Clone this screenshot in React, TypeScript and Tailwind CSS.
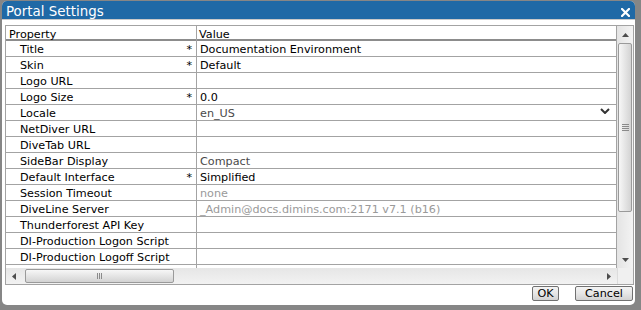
type SettingRowT = {
  label: string;
  required?: boolean;
  value?: string;
  tone?: "dark" | "mid" | "light";
  dropdown?: boolean;
};

const settings: SettingRowT[] = [
  { label: "Title", required: true, value: "Documentation Environment", tone: "dark" },
  { label: "Skin", required: true, value: "Default", tone: "dark" },
  { label: "Logo URL" },
  { label: "Logo Size", required: true, value: "0.0", tone: "dark" },
  { label: "Locale", value: "en_US", tone: "mid", dropdown: true },
  { label: "NetDiver URL" },
  { label: "DiveTab URL" },
  { label: "SideBar Display", value: "Compact", tone: "mid" },
  { label: "Default Interface", required: true, value: "Simplified", tone: "dark" },
  { label: "Session Timeout", value: "none", tone: "light" },
  { label: "DiveLine Server", value: "_Admin@docs.dimins.com:2171 v7.1 (b16)", tone: "light" },
  { label: "Thunderforest API Key" },
  { label: "DI-Production Logon Script" },
  { label: "DI-Production Logoff Script" },
];

const toneClass = {
  dark: "text-black",
  mid: "text-[#4a4a4a]",
  light: "text-[#9a9a9a]",
};

function Arrow({ dir }: { dir: "up" | "down" | "left" | "right" }) {
  const points = {
    up: "0,4 3.5,0 7,4",
    down: "0,0 3.5,4 7,0",
    left: "4,0 0,3.5 4,7",
    right: "0,0 4,3.5 0,7",
  }[dir];
  const vertical = dir === "up" || dir === "down";
  return (
    <svg width={vertical ? 7 : 4} height={vertical ? 4 : 7} viewBox={vertical ? "0 0 7 4" : "0 0 4 7"}>
      <polygon points={points} fill="#4d4d4d" />
    </svg>
  );
}

function VScroll() {
  return (
    <div className="w-[16px] flex flex-col bg-linear-to-r from-[#e4e4e4] to-[#f3f3f3]">
      <div className="h-[16px] flex items-center justify-center pt-[1px]">
        <Arrow dir="up" />
      </div>
      <div className="flex-1 pt-[1px]">
        <div className="h-[169px] mx-[1px] rounded-[2px] border border-[#9a9a9a] bg-linear-to-r from-[#f7f7f7] to-[#d3d3d3] flex flex-col items-center justify-center gap-[1px]">
          <div className="w-[7px] h-[1px] bg-[#8a8a8a]" />
          <div className="w-[7px] h-[1px] bg-[#8a8a8a]" />
          <div className="w-[7px] h-[1px] bg-[#8a8a8a]" />
          <div className="w-[7px] h-[1px] bg-[#8a8a8a]" />
        </div>
      </div>
      <div className="h-[16px] flex items-center justify-center">
        <Arrow dir="down" />
      </div>
    </div>
  );
}

function HScroll() {
  return (
    <div className="h-[16px] flex bg-linear-to-b from-[#e6e6e6] to-[#f2f2f2]">
      <div className="flex-1 flex items-center">
        <div className="w-[16px] flex items-center justify-center">
          <Arrow dir="left" />
        </div>
        <div className="ml-[3px] w-[149px] h-[14px] rounded-[2px] border border-[#9a9a9a] bg-linear-to-b from-[#f7f7f7] to-[#d3d3d3] flex items-center justify-center gap-[1px]">
          <div className="w-[1px] h-[6px] bg-[#8a8a8a]" />
          <div className="w-[1px] h-[6px] bg-[#8a8a8a]" />
          <div className="w-[1px] h-[6px] bg-[#8a8a8a]" />
        </div>
        <div className="flex-1" />
        <div className="w-[16px] flex items-center justify-center">
          <Arrow dir="right" />
        </div>
      </div>
      <div className="w-[16px] bg-[#f0f0f0] border-l border-[#dcdcdc]" />
    </div>
  );
}

function Button({ label, width }: { label: string; width: string }) {
  return (
    <button
      className={`${width} h-[15px] rounded-[2px] border border-[#707070] bg-linear-to-b from-[#f4f4f4] via-[#e6e6e6] to-[#d2d2d2] text-[11.2px] leading-[13px] text-black flex items-center justify-center`}>
      {label}
    </button>
  );
}

export default function App() {
  return (
    <div className="w-[641px] h-[310px] bg-[#868686] pl-[2px] pt-[1px] pr-[6px] pb-[5px] font-['DejaVu_Sans',sans-serif]">
      <div className="h-full flex flex-col bg-white rounded-[5px] overflow-hidden">
        <div className="h-[19px] bg-[#1f69a6] border-b border-[#c9c9c9] flex items-start justify-between pl-[4px] pr-[5px] pt-[3px]">
          <span className="text-[13.4px] leading-[15px] text-white">Portal Settings</span>
          <svg width="9" height="9" viewBox="0 0 9 9" className="mt-[4px]">
            <path d="M1 1 L8 8 M8 1 L1 8" stroke="white" strokeWidth="2.2" strokeLinecap="square" />
          </svg>
        </div>

        <div className="pl-[3px] pr-[1px] pt-[5px]">
          <div className="border border-[#a3a3a3] flex flex-col">
            <div className="h-[242px] flex">
              <div className="flex-1 border-r border-[#a3a3a3] overflow-hidden text-[11.2px] leading-[15px]">
                <div className="h-[15px] grid grid-cols-[191px_1fr] border-b-2 border-[#8c8c8c]">
                  <div className="border-r border-[#a3a3a3] pl-[3px] pt-[2px] leading-[13px]">Property</div>
                  <div className="pl-[2px] pt-[2px] leading-[13px]">Value</div>
                </div>
                {settings.map((row) => (
                  <div key={row.label} className="h-[16px] grid grid-cols-[191px_1fr] border-b border-[#a3a3a3]">
                    <div className="border-r border-[#a3a3a3] pl-[14px] pr-[4px] pt-[1px] flex justify-between text-black">
                      <span>{row.label}</span>
                      {row.required && <span>*</span>}
                    </div>
                    <div className={`pl-[3px] pr-[6px] pt-[1px] flex justify-between items-start ${row.tone ? toneClass[row.tone] : ""}`}>
                      <span className="whitespace-nowrap">{row.value ?? ""}</span>
                      {row.dropdown && (
                        <svg width="10" height="6" viewBox="0 0 10 6" className="mt-[2px]">
                          <polyline points="1,1 5,5 9,1" fill="none" stroke="#333" strokeWidth="2" />
                        </svg>
                      )}
                    </div>
                  </div>
                ))}
                <div className="h-[4px] grid grid-cols-[191px_1fr]">
                  <div className="border-r border-[#a3a3a3]" />
                  <div />
                </div>
              </div>
              <VScroll />
            </div>
            <HScroll />
          </div>
        </div>

        <div className="flex justify-end gap-[16px] pr-[2px] pt-[1px]">
          <Button label="OK" width="w-[27px]" />
          <Button label="Cancel" width="w-[58px]" />
        </div>
      </div>
    </div>
  );
}
